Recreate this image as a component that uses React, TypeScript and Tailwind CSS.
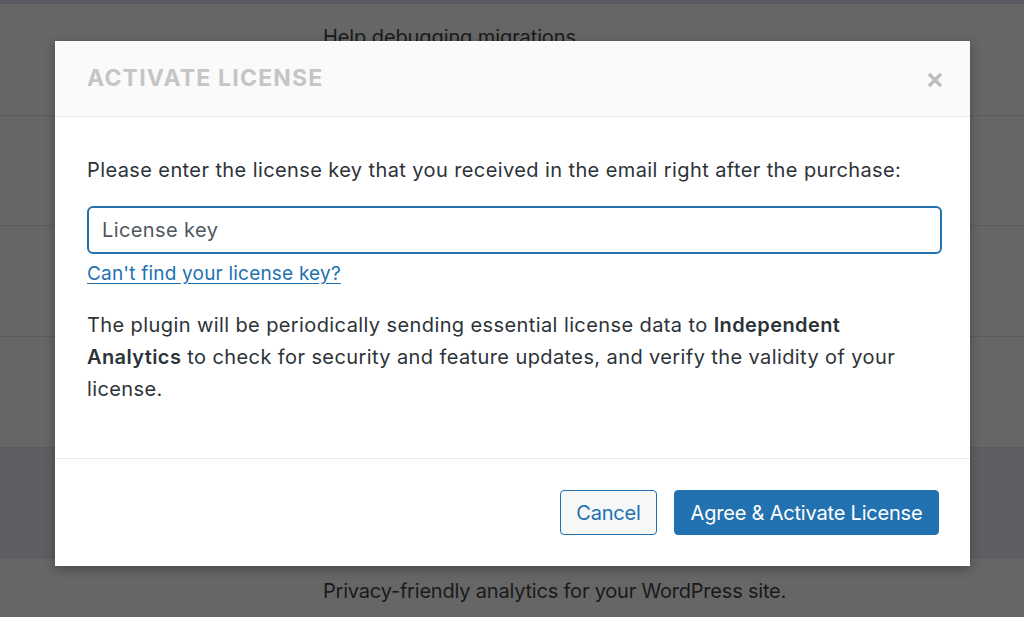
import React from 'react';

const App: React.FC = () => {
  const font = { fontFamily: 'Inter, "Noto Sans", sans-serif' };

  return (
    <div className="relative w-[1024px] h-[617px] overflow-hidden bg-[#666666] text-[#1a1a1a]" style={font}>
      {/* page behind the overlay */}
      <div className="flex flex-col">
        <div className="h-[4px] bg-[#5a5b60] border-b border-[#55565a]"></div>
        <div className="h-[112px] border-b border-[#5c5c5c] pt-[19px] pl-[323px]">
          <span className="text-[20px] leading-[28px] tracking-[-0.1px]">Help debugging migrations</span>
        </div>
        <div className="h-[110px] border-b border-[#5c5c5c]"></div>
        <div className="h-[111px] border-b border-[#5c5c5c]"></div>
        <div className="h-[111px] border-b border-[#5c5c5c]"></div>
        <div className="h-[110px] bg-[#5e5f64] border-b border-[#56575b]"></div>
        <div className="pt-[19px] pl-[323px]">
          <span className="text-[20px] leading-[28px] tracking-[-0.2px]">Privacy-friendly analytics for your WordPress site.</span>
        </div>
      </div>

      {/* modal */}
      <div className="absolute left-[55px] top-[41px] w-[915px] h-[525px] bg-white shadow-[0_3px_10px_rgba(0,0,0,0.3)] flex flex-col">
        <div className="h-[76px] bg-[#fafafa] border-b border-[#e6e6e6] flex items-center justify-between pl-8 pr-[25px] shrink-0">
          <h2 className="text-[23px] font-bold tracking-[1.2px] text-[#c5c5c5] leading-none">ACTIVATE LICENSE</h2>
          <button className="w-[20px] h-[20px] flex items-center justify-center mt-[3px]">
            <svg width="18" height="18" viewBox="0 0 18 18">
              <path d="M3 3 L15 15 M15 3 L3 15" stroke="#bdbdbd" strokeWidth="3.6" strokeLinecap="butt" />
            </svg>
          </button>
        </div>

        <div className="flex-1 pl-8 pr-7 pt-[37px] text-[20px] tracking-[0.4px] text-[#2c3338]">
          <p className="leading-[32px]">Please enter the license key that you received in the email right after the purchase:</p>
          <input
            type="text"
            placeholder="License key"
            className="mt-[20px] w-full h-[48px] border-2 border-[#2271b1] rounded-[6px] px-[13px] text-[20px] tracking-[0.4px] placeholder:text-[#50575e] outline-none"
          />
          <a href="#" className="block mt-[8px] leading-[24px] text-[19px] tracking-[0.2px] text-[#2271b1] underline underline-offset-[3px] w-fit">
            Can't find your license key?
          </a>
          <p className="mt-[23px] mr-[10px] leading-[32px]">
            The plugin will be periodically sending essential license data to <strong className="font-semibold">Independent Analytics</strong> to check for security and feature updates, and verify the validity of your license.
          </p>
        </div>

        <div className="h-[108px] border-t border-[#ebebeb] flex items-center justify-end gap-[17px] pr-[31px] shrink-0">
          <button className="h-[45px] w-[97px] rounded-[4px] border border-[#2271b1] bg-[#f6f7f7] text-[#2271b1] text-[20px] tracking-[-0.2px]">
            Cancel
          </button>
          <button className="h-[45px] w-[265px] rounded-[4px] border border-[#2271b1] bg-[#2271b1] text-white text-[20px] tracking-[-0.2px]">
            Agree &amp; Activate License
          </button>
        </div>
      </div>
    </div>
  );
};

export default App;
